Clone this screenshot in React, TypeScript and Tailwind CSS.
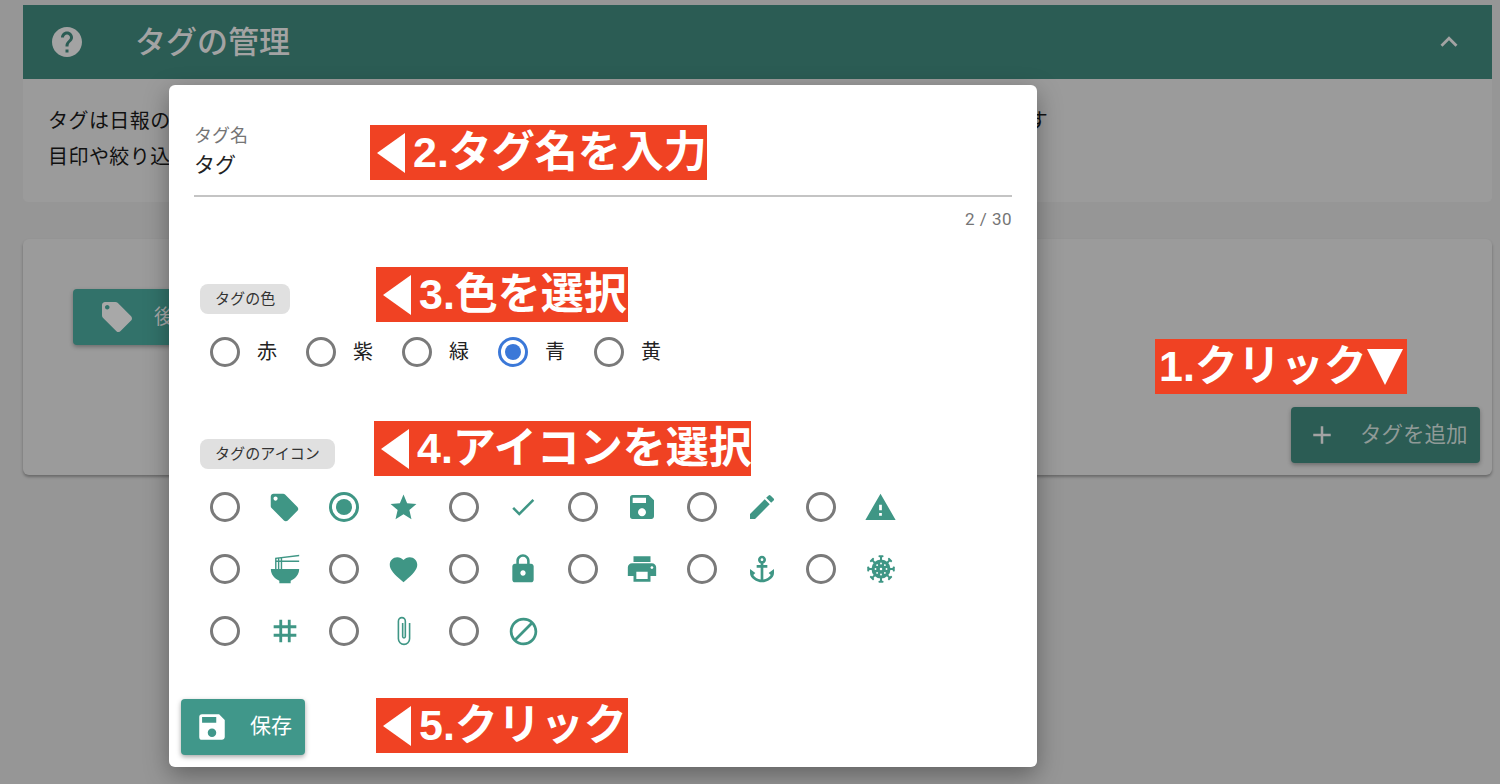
import { ReactNode } from "react";
import {
  MdAdd,
  MdAnchor,
  MdBlock,
  MdCheck,
  MdEdit,
  MdExpandLess,
  MdFavorite,
  MdHelp,
  MdLocalOffer,
  MdLock,
  MdPrint,
  MdRamenDining,
  MdSave,
  MdStar,
  MdTag,
  MdWarning,
} from "react-icons/md";

const FONT = "font-['Roboto','Noto_Sans_CJK_JP',sans-serif]";

function Radio({ checked, color }: { checked?: boolean; color?: string }) {
  return (
    <span
      className={`w-[30px] h-[30px] shrink-0 rounded-full border-[3px] flex items-center justify-center ${
        checked ? (color === "blue" ? "border-[#3b78d8]" : "border-[#3f9685]") : "border-[#7a7a7a]"
      }`}
    >
      {checked && (
        <span className={`w-[16px] h-[16px] rounded-full ${color === "blue" ? "bg-[#3b78d8]" : "bg-[#3f9685]"}`} />
      )}
    </span>
  );
}

function Chip({ children }: { children: ReactNode }) {
  return (
    <span className="inline-flex items-center h-[30px] px-[15px] rounded-[8px] bg-[#e0e0e0] text-[15px] tracking-[0.1px] text-[#333]">
      {children}
    </span>
  );
}

function Note({ className, children }: { className: string; children: ReactNode }) {
  return (
    <div
      className={`absolute h-[55px] bg-[#f04223] text-white font-bold text-[43px] leading-none flex items-center whitespace-nowrap overflow-hidden font-['Liberation_Sans','Noto_Sans_CJK_JP',sans-serif] ${className}`}
    >
      {children}
    </div>
  );
}

function TriLeft() {
  return (
    <svg width="28" height="40" viewBox="0 0 28 40" className="ml-[7px] mr-[8px] shrink-0">
      <path d="M28 0V40L0 20Z" fill="#fff" />
    </svg>
  );
}

function PaperClip() {
  return (
    <svg width="34" height="32" viewBox="0 0 24 24" fill="none" stroke="currentColor" strokeWidth="1.2">
      <path d="M16.2 6v11.8a4.2 4.2 0 0 1-8.4 0V4.6a2.6 2.6 0 0 1 5.2 0v11.6a1 1 0 0 1-2 0V6" />
    </svg>
  );
}

// wheel with eight knobbed spokes and a dotted hub
function Wheel() {
  const angles = [0, 45, 90, 135, 180, 225, 270, 315];
  return (
    <svg width="30" height="30" viewBox="0 0 24 24" fill="currentColor">
      <circle cx="12" cy="12" r="7.6" />
      {angles.map((a) => (
        <g key={a} transform={`rotate(${a} 12 12)`}>
          <rect x="11.2" y="1.6" width="1.6" height="4" />
          <rect x="10" y="1" width="4" height="1.6" rx="0.6" />
          <circle cx="12" cy="7.6" r="0.75" fill="#fff" />
        </g>
      ))}
      <circle cx="12" cy="12" r="1" fill="#fff" />
    </svg>
  );
}

const colors = ["赤", "紫", "緑", "青", "黄"];

const iconRows = [
  [
    { icon: <MdLocalOffer size={33} /> },
    { icon: <MdStar size={31} />, checked: true },
    { icon: <MdCheck size={30} /> },
    { icon: <MdSave size={32} /> },
    { icon: <MdEdit size={32} /> },
    { icon: <MdWarning size={33} /> },
  ],
  [
    { icon: <MdRamenDining size={34} /> },
    { icon: <MdFavorite size={33} /> },
    { icon: <MdLock size={32} /> },
    { icon: <MdPrint size={34} /> },
    { icon: <MdAnchor size={32} /> },
    { icon: <Wheel /> },
  ],
  [{ icon: <MdTag size={34} /> }, { icon: <PaperClip /> }, { icon: <MdBlock size={33} /> }],
];

export default function App() {
  return (
    <div className={`relative w-[1500px] h-[784px] overflow-hidden bg-[#969696] ${FONT}`}>
      {/* Page behind the dialog */}
      <div className="pl-[23px] pt-[5px] pr-[8px]">
        <div className="h-[74px] bg-[#2b5c54] flex items-center px-[26px] text-[#a3a3a3]">
          <MdHelp size={36} />
          <h1 className="ml-[50px] text-[31px] font-medium leading-[40px] pt-[2px]">タグの管理</h1>
          <MdExpandLess size={34} className="ml-auto" />
        </div>
        <div className="h-[123px] bg-[#9b9b9b] rounded-b-[5px] pl-[25px] pt-[24px] text-[20px] tracking-[0.45px] leading-[36px] text-[#111] whitespace-nowrap overflow-hidden">
          <p>タグは日報の内容を分類するためのもので、一覧画面や検索画面に表示される項目として利用できるものです</p>
          <p>目印や絞り込みに利用できます</p>
        </div>

        <div className="mt-[37px] h-[236px] bg-[#9b9b9b] rounded-[6px] shadow-[0_2px_3px_rgba(0,0,0,0.3)] flex flex-col pl-[50px] pr-[12px] pt-[50px] pb-[12px]">
          <div className="h-[56px] w-[200px] bg-[#32726a] rounded-[4px] shadow-[0_2px_4px_rgba(0,0,0,0.3)] flex items-center pl-[26px] text-[#a8a8a8] text-[20px]">
            <MdLocalOffer size={36} />
            <span className="ml-[19px]">後で読む</span>
          </div>
          <div className="mt-auto self-end h-[56px] w-[189px] bg-[#2b5c54] rounded-[4px] shadow-[0_2px_4px_rgba(0,0,0,0.3)] flex items-center pl-[16px] text-[#8f9a97] text-[21.5px]">
            <MdAdd size={30} className="text-[#a3a3a3]" />
            <span className="ml-[23px]">タグを追加</span>
          </div>
        </div>
      </div>

      {/* Dialog */}
      <div className="absolute left-[169px] top-[85px] w-[868px] h-[682px] bg-white rounded-[6px] shadow-[0_8px_24px_rgba(0,0,0,0.35)] flex flex-col">
        <div className="mx-[25px] mt-[40px] pb-[12px] border-b-2 border-[#c4c4c4]">
          <div className="text-[18px] leading-[22px] text-[#757575]">タグ名</div>
          <div className="text-[21px] leading-[36px] text-[#222]">タグ</div>
        </div>
        <div className="mx-[25px] mt-[12px] text-right text-[17px] leading-[20px] tracking-[0.5px] text-[#757575]">2 / 30</div>

        <div className="ml-[31px] mt-[55px]">
          <Chip>タグの色</Chip>
        </div>
        <div className="ml-[41px] mt-[23px] flex gap-[32px]">
          {colors.map((c) => (
            <div key={c} className="flex items-center gap-[17px] w-[64px]">
              <Radio checked={c === "青"} color="blue" />
              <span className="text-[20px] leading-[30px] text-[#222]">{c}</span>
            </div>
          ))}
        </div>

        <div className="ml-[31px] mt-[72px]">
          <Chip>タグのアイコン</Chip>
        </div>
        <div className="ml-[41px] mt-[23px] flex flex-col gap-[32px]">
          {iconRows.map((row, i) => (
            <div key={i} className="flex">
              {row.map((item, j) => (
                <div key={j} className="flex items-center w-[119.3px]">
                  <Radio checked={item.checked} />
                  <span className="w-[89px] h-[30px] flex items-center justify-center text-[#3f9685]">{item.icon}</span>
                </div>
              ))}
            </div>
          ))}
        </div>

        <div className="ml-[12px] mt-[53px] w-[124px] h-[56px] bg-[#40978a] rounded-[4px] shadow-[0_2px_5px_rgba(0,0,0,0.35)] flex items-center pl-[14px] text-white">
          <MdSave size={34} />
          <span className="ml-[21px] text-[21px]">保存</span>
        </div>
      </div>

      {/* Annotations */}
      <Note className="left-[370px] top-[125px] w-[337px]">
        <TriLeft />
        2.タグ名を入力
      </Note>
      <Note className="left-[376px] top-[267px] w-[252px]">
        <TriLeft />
        3.色を選択
      </Note>
      <Note className="left-[374px] top-[421px] w-[377px]">
        <TriLeft />
        4.アイコンを選択
      </Note>
      <Note className="left-[376px] top-[698px] w-[252px]">
        <TriLeft />
        5.クリック
      </Note>
      <Note className="left-[1155px] top-[339px] w-[252px] pl-[4px]">
        1.クリック
        <svg width="36" height="36" viewBox="0 0 36 36" className="shrink-0">
          <path d="M0 0H36L18 36Z" fill="#fff" />
        </svg>
      </Note>
    </div>
  );
}
